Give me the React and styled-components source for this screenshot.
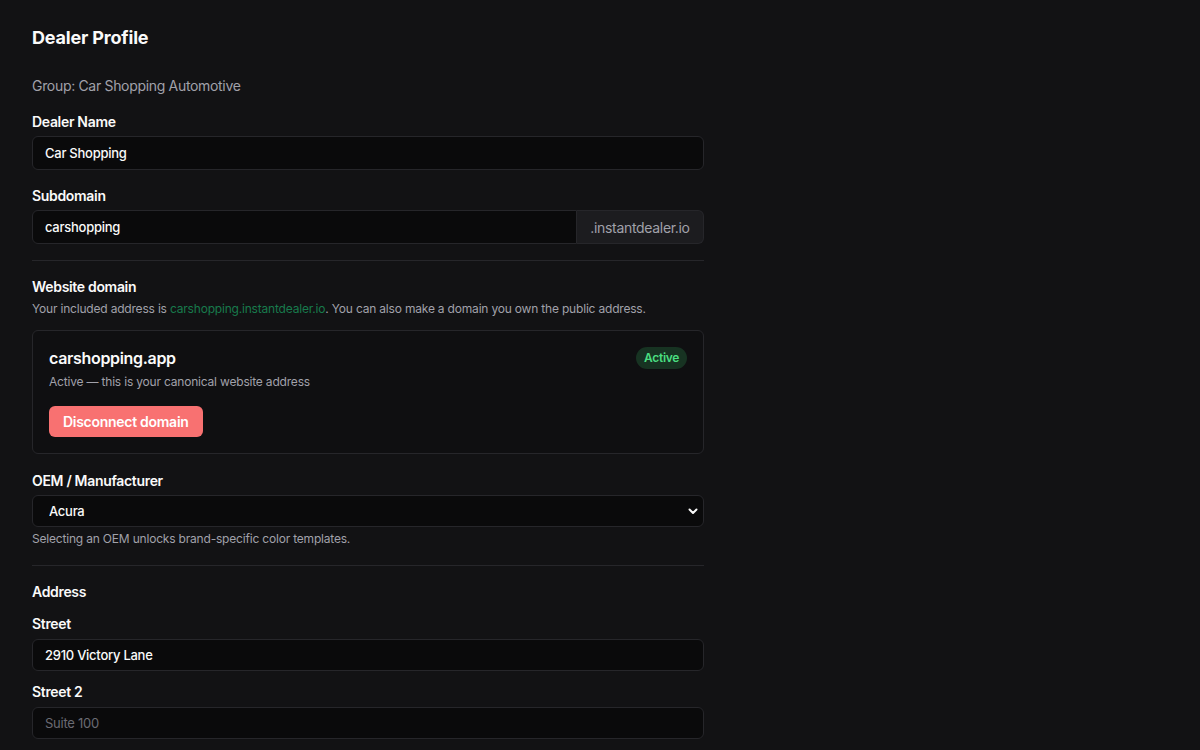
import React from "react";
import styled, { createGlobalStyle } from "styled-components";

const GlobalStyle = createGlobalStyle`
  html, body {
    margin: 0;
    padding: 0;
    background: #121214;
  }
  body {
    font-family: Inter, "Liberation Sans", sans-serif;
    color: #fafafa;
    letter-spacing: -0.02em;
    -webkit-font-smoothing: antialiased;
  }
`;

const Page = styled.div`
  min-height: 750px;
  padding: 24px 32px;
  box-sizing: border-box;
`;

const Form = styled.div`
  width: 672px;
  display: flex;
  flex-direction: column;
`;

const Title = styled.h1`
  margin: 0;
  font-size: 18px;
  line-height: 28px;
  font-weight: 700;
  letter-spacing: -0.01em;
  color: #fafafa;
`;

const GroupText = styled.p`
  margin: 24px 0 0;
  font-size: 14px;
  line-height: 20px;
  color: #a1a1aa;
`;

const Field = styled.div`
  display: flex;
  flex-direction: column;
  gap: ${(p) => p.$gap || 4}px;
  margin-top: ${(p) => p.$top || 16}px;
`;

const Label = styled.label`
  font-size: 14px;
  line-height: 20px;
  font-weight: 600;
  color: #fafafa;
`;

const Input = styled.input`
  box-sizing: border-box;
  height: ${(p) => p.$h || 34}px;
  width: 100%;
  padding: 0 12px;
  background: #0a0a0b;
  border: 1px solid #26262a;
  border-radius: 6px;
  color: #fafafa;
  font-family: inherit;
  font-size: 13px;
  font-weight: 500;
  letter-spacing: -0.02em;
  outline: none;
  &::placeholder {
    color: #6b6b73;
    font-weight: 400;
  }
`;

const InputGroup = styled.div`
  display: flex;
  height: 34px;
`;

const GroupInput = styled(Input)`
  flex: 1;
  border-radius: 6px 0 0 6px;
`;

const Suffix = styled.span`
  box-sizing: border-box;
  width: 127px;
  display: flex;
  align-items: center;
  justify-content: center;
  background: #1c1c1f;
  border: 1px solid #26262a;
  border-left: none;
  border-radius: 0 6px 6px 0;
  font-size: 14px;
  color: #a1a1aa;
`;

const Divider = styled.hr`
  margin: ${(p) => p.$top || 16}px 0 0;
  border: none;
  border-top: 1px solid #26262a;
`;

const Help = styled.p`
  margin: 0;
  font-size: 12px;
  line-height: 16px;
  letter-spacing: -0.016em;
  color: #a1a1aa;
`;

const Link = styled.a`
  color: #187a4c;
  text-decoration: none;
`;

const Card = styled.div`
  margin-top: 13px;
  padding: 15px 16px 16px;
  background: #0f0f11;
  border: 1px solid #26262a;
  border-radius: 6px;
`;

const CardHead = styled.div`
  display: flex;
  align-items: center;
  justify-content: space-between;
`;

const DomainName = styled.div`
  font-size: 16px;
  line-height: 24px;
  font-weight: 600;
  color: #fafafa;
`;

const Badge = styled.span`
  padding: 3px 8px;
  border-radius: 999px;
  background: #173322;
  color: #4ade80;
  font-size: 12px;
  line-height: 16px;
  font-weight: 600;
`;

const CardNote = styled(Help)`
  margin-top: 4px;
`;

const DangerButton = styled.button`
  margin-top: 16px;
  height: 31px;
  padding: 0 14px;
  background: #f87171;
  border: none;
  border-radius: 6px;
  color: #fff;
  font-family: inherit;
  font-size: 14px;
  font-weight: 600;
  letter-spacing: -0.02em;
  cursor: pointer;
`;

const SelectWrap = styled.div`
  position: relative;
  height: 32px;
`;

const Select = styled.select`
  appearance: none;
  box-sizing: border-box;
  width: 100%;
  height: 32px;
  padding: 0 16px;
  background: #0a0a0b;
  border: 1px solid #26262a;
  border-radius: 6px;
  color: #fafafa;
  font-family: inherit;
  font-size: 13px;
  font-weight: 500;
  letter-spacing: -0.02em;
  outline: none;
`;

const Chevron = styled.svg`
  position: absolute;
  right: 5px;
  top: 10px;
  pointer-events: none;
`;

const SectionTitle = styled.div`
  margin-top: 16px;
  font-size: 14px;
  line-height: 20px;
  font-weight: 600;
`;

export default function App() {
  return (
    <>
      <GlobalStyle />
      <Page>
        <Form>
          <Title>Dealer Profile</Title>
          <GroupText>Group: Car Shopping Automotive</GroupText>

          <Field>
            <Label>Dealer Name</Label>
            <Input defaultValue="Car Shopping" />
          </Field>

          <Field>
            <Label>Subdomain</Label>
            <InputGroup>
              <GroupInput defaultValue="carshopping" />
              <Suffix>.instantdealer.io</Suffix>
            </InputGroup>
          </Field>

          <Divider />

          <Field>
            <Label>Website domain</Label>
            <Help>
              Your included address is{" "}
              <Link href="#">carshopping.instantdealer.io</Link>. You can also
              make a domain you own the public address.
            </Help>
          </Field>

          <Card>
            <CardHead>
              <DomainName>carshopping.app</DomainName>
              <Badge>Active</Badge>
            </CardHead>
            <CardNote>Active — this is your canonical website address</CardNote>
            <DangerButton>Disconnect domain</DangerButton>
          </Card>

          <Field $top={17}>
            <Label>OEM / Manufacturer</Label>
            <SelectWrap>
              <Select defaultValue="acura">
                <option value="acura">Acura</option>
              </Select>
              <Chevron width="12" height="12" viewBox="0 0 24 24" fill="none" stroke="#fafafa" strokeWidth="4" strokeLinecap="round" strokeLinejoin="round">
                <path d="M5 9l7 7 7-7" />
              </Chevron>
            </SelectWrap>
            <Help>Selecting an OEM unlocks brand-specific color templates.</Help>
          </Field>

          <Divider $top={18} />

          <SectionTitle>Address</SectionTitle>

          <Field $top={12} $gap={5}>
            <Label>Street</Label>
            <Input $h={32} defaultValue="2910 Victory Lane" />
          </Field>

          <Field $top={11} $gap={5}>
            <Label>Street 2</Label>
            <Input $h={32} placeholder="Suite 100" />
          </Field>
        </Form>
      </Page>
    </>
  );
}
